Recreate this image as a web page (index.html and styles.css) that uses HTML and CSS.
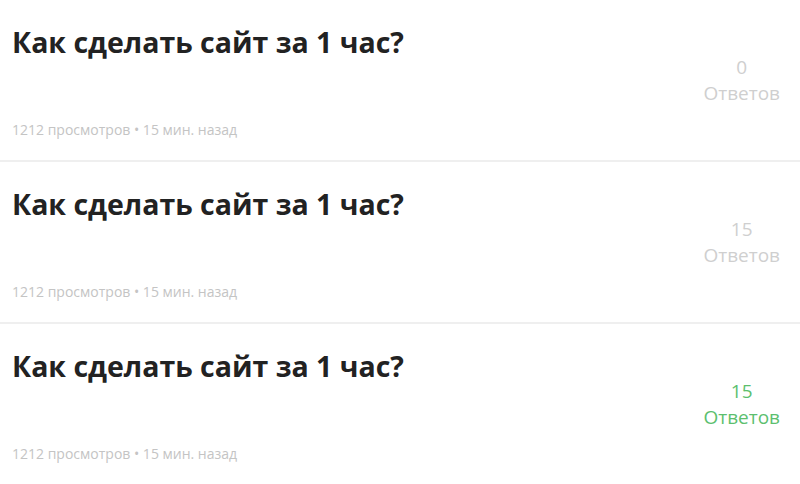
FILE: index.html
```html
<!DOCTYPE html>
<html lang="ru">
<head>
<meta charset="utf-8">
<link rel="stylesheet" href="styles.css">
</head>
<body>
<div class="list">
  <div class="item">
    <div class="main">
      <h2 class="title">Как сделать сайт за 1 час?</h2>
      <div class="meta">1212 просмотров • 15 мин. назад</div>
    </div>
    <div class="answers"><span class="num">0</span><span class="label">Ответов</span></div>
  </div>
  <div class="item">
    <div class="main">
      <h2 class="title">Как сделать сайт за 1 час?</h2>
      <div class="meta">1212 просмотров • 15 мин. назад</div>
    </div>
    <div class="answers"><span class="num">15</span><span class="label">Ответов</span></div>
  </div>
  <div class="item">
    <div class="main">
      <h2 class="title">Как сделать сайт за 1 час?</h2>
      <div class="meta">1212 просмотров • 15 мин. назад</div>
    </div>
    <div class="answers answered"><span class="num">15</span><span class="label">Ответов</span></div>
  </div>
</div>
</body>
</html>
```

FILE: styles.css
```css
html, body {
  margin: 0;
  padding: 0;
  background: #fff;
}
body {
  font-family: "Open Sans", "Noto Sans", sans-serif;
  width: 800px;
  height: 484px;
  overflow: hidden;
}
.list {
  display: flex;
  flex-direction: column;
}
.item {
  display: flex;
  align-items: center;
  justify-content: space-between;
  height: 162px;
  box-sizing: border-box;
  padding: 0 20px 0 12px;
  border-bottom: 2px solid #efefef;
}
.item:last-child {
  height: 160px;
  border-bottom: none;
}
.main {
  display: flex;
  flex-direction: column;
  justify-content: space-between;
  height: 100%;
  box-sizing: border-box;
  padding: 23px 0 21px;
}
.title {
  margin: 0;
  font-size: 28.5px;
  font-weight: 700;
  color: #222;
  line-height: 38px;
}
.meta {
  font-size: 14px;
  color: #c4c4c4;
  line-height: 18px;
}
.answers {
  display: flex;
  flex-direction: column;
  align-items: center;
  color: #cfcfcf;
  font-size: 19px;
  line-height: 26px;
}
.answers.answered {
  color: #5cbf6e;
}
```
